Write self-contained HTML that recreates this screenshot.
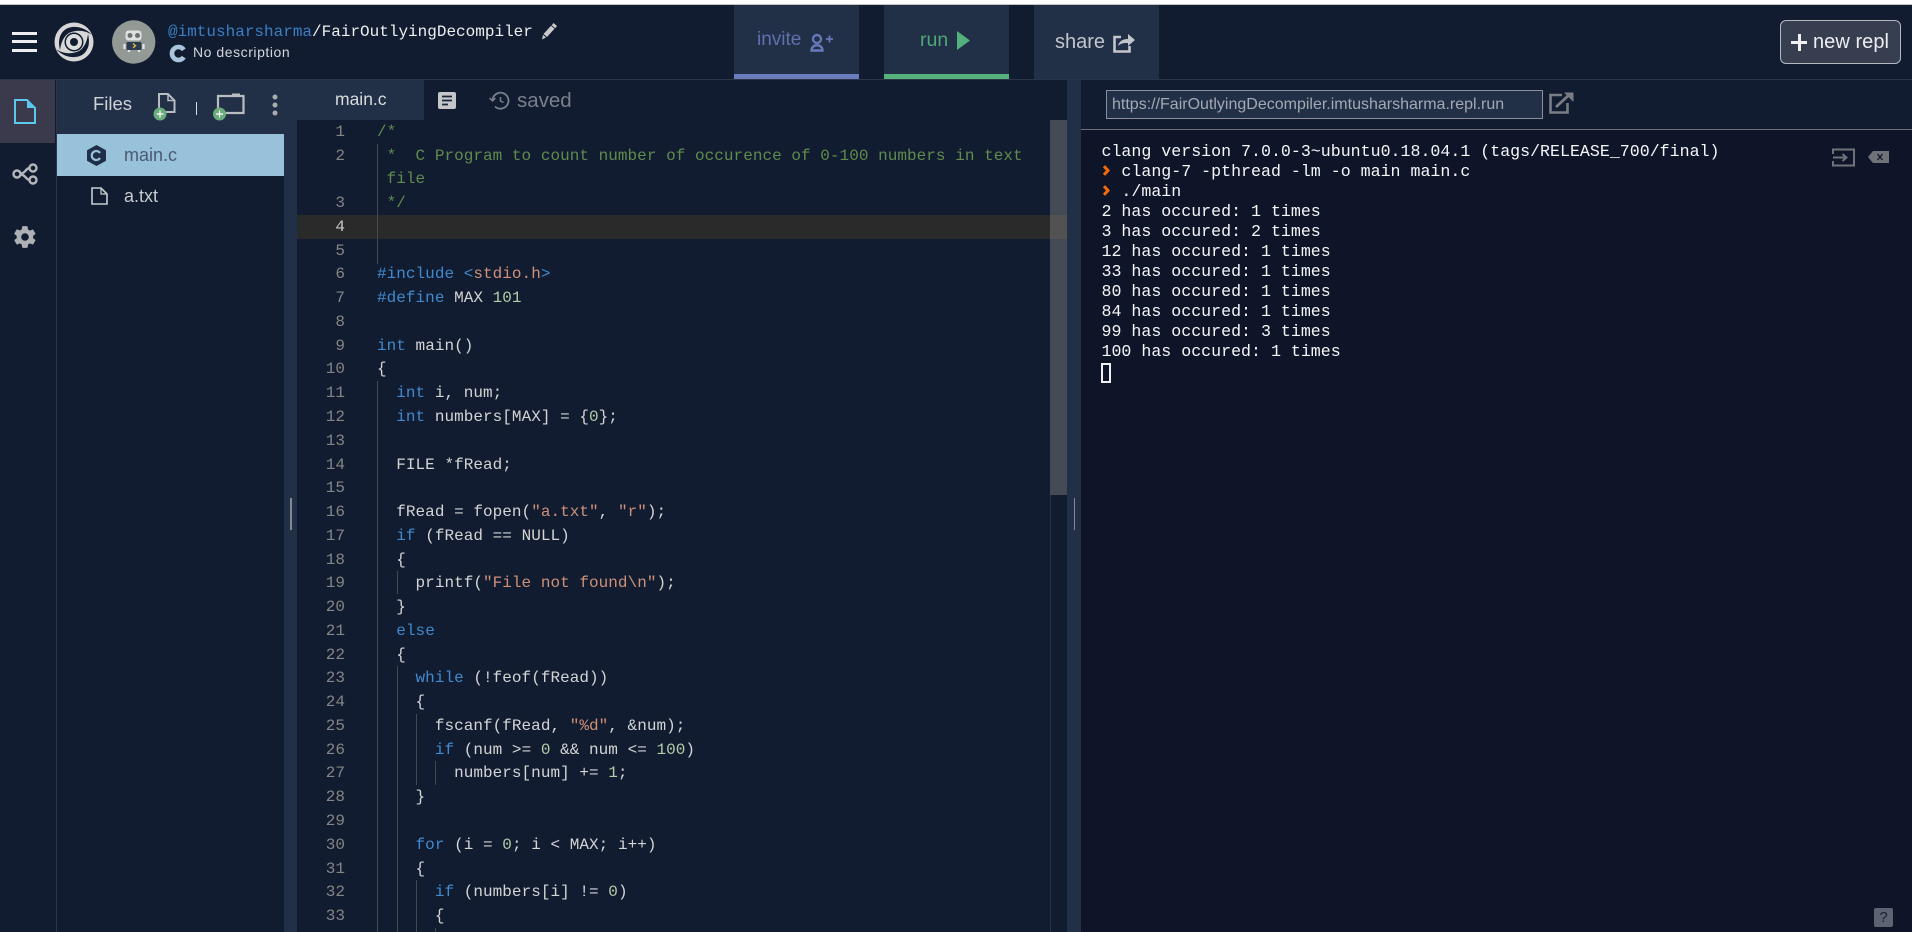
<!DOCTYPE html>
<html lang="en">
<head>
<meta charset="utf-8">
<title>FairOutlyingDecompiler</title>
<style>
html,body{margin:0;padding:0;width:1912px;height:932px;overflow:hidden;background:#111c30}
*{box-sizing:border-box}
.a{position:absolute}
body{font-family:"Liberation Sans",sans-serif;position:relative}
svg{position:absolute;overflow:visible}
.btn{position:absolute;top:5px;height:74px;width:125px;background:#212f47;font-size:18px}
.btn span{position:absolute;white-space:nowrap}
.stripe{position:absolute;left:0;right:0;bottom:0;height:5px}
#nums,#code{position:absolute;top:120.8px;font:16px/23.77px "Liberation Mono",monospace;white-space:pre;margin:0}
#nums{left:297px;width:48px;text-align:right;color:#858585}
#code{left:377px;color:#d4d4d4;letter-spacing:.035px}
#code div,#nums div{height:23.77px}
.k{color:#4189cc}.s{color:#ce9178}.n{color:#b5cea8}.c{color:#608b4e}
.g{position:absolute;width:1px;background:#44484f}
#term{position:absolute;left:1101.5px;top:142px;font:16.63px/20px "Liberation Mono",monospace;color:#f4f6f8;white-space:pre;margin:0}
</style>
</head>
<body>
<div class="a" style="left:0;top:0;width:1912px;height:4px;background:#fff"></div>
<div class="a" style="left:0;top:4px;width:1912px;height:1px;background:#c4c4c4"></div>
<div class="a" style="left:0;top:5px;width:1912px;height:74px;background:#111c30"></div>
<div class="a" style="left:0;top:79px;width:1912px;height:1px;background:#2a3648"></div>

<!-- hamburger -->
<div class="a" style="left:12px;top:32px;width:25px;height:3px;background:#eee"></div>
<div class="a" style="left:12px;top:40px;width:25px;height:3px;background:#eee"></div>
<div class="a" style="left:12px;top:49px;width:25px;height:3px;background:#eee"></div>

<!-- logo -->
<svg style="left:54px;top:21.500px" width="40" height="40" viewBox="0 0 40 40">
<circle cx="20" cy="20" r="19.500" fill="#d6d6d6"/>
<path id="bl" d="M38 13C30 4 17 2.500 10 8.500 5 13 4 20 6 28 7 20 10 14 15 11 22 7.500 31 8 38 13Z" fill="#111c30"/>
<path d="M38 13C30 4 17 2.500 10 8.500 5 13 4 20 6 28 7 20 10 14 15 11 22 7.500 31 8 38 13Z" fill="#111c30" transform="rotate(180 20 20)"/>
<circle cx="20" cy="20" r="9.500" fill="#111c30"/>
<circle cx="20" cy="20" r="6" fill="none" stroke="#dcdcdc" stroke-width="4"/>
</svg>

<!-- avatar -->
<svg style="left:112px;top:20px" width="44" height="44" viewBox="0 0 44 44">
<circle cx="21.700" cy="22" r="21.700" fill="#939995"/>
<rect x="13.500" y="10.500" width="16" height="10" rx="3" fill="#dfe1e1"/>
<circle cx="18" cy="15.500" r="2.500" fill="#6a6f70"/><circle cx="25.500" cy="15.500" r="2.500" fill="#6a6f70"/>
<rect x="14.500" y="22" width="15" height="8" rx="1.500" fill="#2a3a50"/>
<path d="M21 23.500l2.500 2.200-2.500 2.200" fill="none" stroke="#e6b63a" stroke-width="1.400"/>
<path d="M12.500 24v5M31.500 24v5M17 30v2M27 30v2" stroke="#e4e6e6" stroke-width="2.200"/>
</svg>

<div class="a" style="left:168px;top:22px;font:16px/20px 'Liberation Mono',monospace;color:#eee;white-space:pre"><span style="color:#3a7fc4">@imtusharsharma</span>/FairOutlyingDecompiler</div>
<svg style="left:541px;top:22px" width="17" height="18" viewBox="0 0 17 18"><path d="M12.500 1l3.500 3-1.800 2.200-3.500-3zM10 3.800l3.500 3-7.500 8.200-3.500-3zM2 12.800l3 2.700-4 2z" fill="#c8c9cb"/></svg>
<svg style="left:169px;top:45px" width="18" height="17" viewBox="0 0 18 17"><path d="M14.800 4.800A6.500 6.500 0 1 0 14.800 12.200" fill="none" stroke="#a9c4dc" stroke-width="4.600"/></svg>
<div class="a" style="left:193px;top:44px;font-size:14px;line-height:17px;color:#d4d6da;letter-spacing:.55px;white-space:nowrap">No description</div>

<!-- top buttons -->
<div class="btn" style="left:734px"><span style="left:23px;top:24px;color:#5f70ad;font-size:19px">invite</span>
<svg style="left:76px;top:28px" width="24" height="20" viewBox="0 0 24 20"><circle cx="7" cy="6" r="4" fill="none" stroke="#6678b8" stroke-width="2.400"/><path d="M1.500 17.500c0-7 11-7 11 0z" fill="none" stroke="#6678b8" stroke-width="2.400"/><path d="M16 6h7M19.500 2.500v7" stroke="#6678b8" stroke-width="1.800"/></svg>
<div class="stripe" style="background:#6a7cbc"></div></div>
<div class="btn" style="left:884px"><span style="left:36px;top:24px;color:#4fa877;font-size:19.500px">run</span>
<svg style="left:72.500px;top:26px" width="13" height="19" viewBox="0 0 13 19"><path d="M0 0l13 9.500L0 19z" fill="#53b07c"/></svg>
<div class="stripe" style="background:#55b27d"></div></div>
<div class="btn" style="left:1034px"><span style="left:21px;top:26px;color:#c3c6cb;font-size:20px">share</span>
<svg style="left:79px;top:28px" width="23" height="20" viewBox="0 0 23 20"><path d="M8 4H1.500v14.500h15V13" fill="none" stroke="#c3c6cb" stroke-width="2.600"/><path d="M5 13c1-5 5-7 10-7V1l7 6-7 6v-3c-4 0-7 0-10 3z" fill="#c3c6cb"/></svg>
</div>

<!-- new repl -->
<div class="a" style="left:1780px;top:20px;width:121px;height:44px;background:#363e50;border:1px solid #b4b8c0;border-radius:6px"></div>
<div class="a" style="left:1791px;top:41px;width:16px;height:3px;background:#f0f0f0"></div>
<div class="a" style="left:1797.500px;top:34px;width:3px;height:17px;background:#f0f0f0"></div>
<div class="a" style="left:1813px;top:30px;font-size:20px;line-height:24px;color:#eceef0;white-space:nowrap;letter-spacing:.05px">new repl</div>

<!-- sidebar -->
<div class="a" style="left:0;top:80px;width:55px;height:63px;background:#3a3a4c"></div>
<div class="a" style="left:56px;top:80px;width:1px;height:852px;background:#2a3648"></div>
<svg style="left:14px;top:99px" width="22" height="25" viewBox="0 0 22 25"><path d="M1 1h12l8 8v15H1z" fill="none" stroke="#5cc8ee" stroke-width="2"/><path d="M13 1l8 8h-8z" fill="#5cc8ee"/></svg>
<svg style="left:12px;top:164px" width="26" height="20" viewBox="0 0 26 20" fill="none" stroke="#b4b6b9" stroke-width="2.400"><circle cx="5" cy="10" r="3.500"/><circle cx="21" cy="4" r="3.500"/><circle cx="21" cy="16" r="3.500"/><path d="M8.500 9.500c5 0 5-5 9-5.500M8.500 10.500c5 0 5 5 9 5.500"/></svg>
<svg style="left:12px;top:224px" width="26" height="26" viewBox="0 0 24 24"><path fill="#aeb0b3" d="M19.400 13c.1-.3.100-.7.100-1s0-.7-.1-1l2.100-1.600c.2-.1.200-.4.100-.6l-2-3.500c-.1-.2-.4-.3-.6-.2l-2.500 1c-.5-.4-1.100-.7-1.700-1l-.4-2.600c0-.3-.2-.5-.5-.5h-4c-.3 0-.5.2-.5.500L9 5c-.6.300-1.200.6-1.700 1l-2.500-1c-.2-.1-.5 0-.6.200l-2 3.500c-.1.200-.1.500.1.600L4.400 11c-.1.300-.1.700-.1 1s0 .7.100 1l-2.100 1.600c-.2.100-.2.400-.1.600l2 3.500c.1.200.4.300.6.200l2.500-1c.5.400 1.100.7 1.700 1l.4 2.600c0 .3.200.5.500.5h4c.3 0 .5-.2.500-.5l.4-2.600c.6-.3 1.200-.6 1.700-1l2.500 1c.2.100.5 0 .6-.2l2-3.500c.1-.2.100-.5-.1-.6zM12 15.500a3.500 3.500 0 1 1 0-7 3.500 3.500 0 0 1 0 7z"/></svg>

<!-- files panel -->
<div class="a" style="left:57px;top:80px;width:240px;height:852px;background:#212f47"></div>
<div class="a" style="left:57px;top:134px;width:227px;height:798px;background:#111c30"></div>
<div class="a" style="left:57px;top:134px;width:227px;height:42px;background:#98c1da"></div>
<div class="a" style="left:93px;top:93px;font-size:18.500px;line-height:22px;color:#d0d3d6">Files</div>
<svg style="left:153px;top:93px" width="24" height="29" viewBox="0 0 24 29"><path d="M6 1h9l6.500 6.500V19H6z" fill="none" stroke="#b9bcc0" stroke-width="2"/><path d="M15 1v6.500h6.500" fill="none" stroke="#b9bcc0" stroke-width="1.500"/><circle cx="7" cy="21" r="6.500" fill="#6bac7c"/><path d="M3.500 21h7M7 17.500v7" stroke="#fff" stroke-width="1.200"/></svg>
<div class="a" style="left:195.500px;top:102px;width:1.500px;height:13px;background:#dcdcdc"></div>
<svg style="left:213px;top:92px" width="32" height="30" viewBox="0 0 32 30"><path d="M5 4h25.500v17H5z" fill="none" stroke="#b9bcc0" stroke-width="2.200"/><rect x="19" y="1.500" width="8" height="3" fill="#b9bcc0"/><circle cx="6.500" cy="22" r="6.500" fill="#6bac7c"/><path d="M3 22h7M6.500 18.500v7" stroke="#fff" stroke-width="1.200"/></svg>
<svg style="left:272px;top:94px" width="6" height="22" viewBox="0 0 6 22" fill="#a9adb3"><circle cx="3" cy="3" r="2.500"/><circle cx="3" cy="11" r="2.500"/><circle cx="3" cy="19" r="2.500"/></svg>

<svg style="left:87px;top:145px" width="19" height="21" viewBox="0 0 19 21"><path d="M9.500 0L19 5.300v10.400L9.500 21 0 15.700V5.300z" fill="#1f2f4a"/><path d="M13 8a4.500 4.500 0 1 0 0 5" fill="none" stroke="#98c1da" stroke-width="2.200"/></svg>
<div class="a" style="left:124px;top:144.500px;font-size:18px;line-height:21px;color:#4b5a72">main.c</div>
<svg style="left:91px;top:187px" width="17" height="18" viewBox="0 0 17 18"><path d="M1 1h9l6 6v10H1z" fill="none" stroke="#c8cbcf" stroke-width="1.600"/><path d="M10 1v6h6" fill="none" stroke="#c8cbcf" stroke-width="1.200"/></svg>
<div class="a" style="left:124px;top:186px;font-size:18px;line-height:21px;color:#c7cacf">a.txt</div>

<!-- editor -->
<div class="a" style="left:297px;top:80px;width:770px;height:852px;background:#111c30"></div>
<div class="a" style="left:297px;top:80px;width:127px;height:40px;background:#212f47"></div>
<div class="a" style="left:335px;top:89px;font-size:17.500px;line-height:21px;color:#d9dbde">main.c</div>
<svg style="left:438px;top:92px" width="18" height="17" viewBox="0 0 18 17"><rect width="18" height="17" rx="2" fill="#c4c6c9"/><path d="M4 4.500h10M4 8.500h10M4 12.500h6" stroke="#1a2436" stroke-width="1.700"/></svg>
<svg style="left:489px;top:91px" width="21" height="19" viewBox="0 0 21 19" fill="none" stroke="#7a7f8a" stroke-width="1.800"><path d="M3.500 9.500a8 8 0 1 1 2.500 6"/><path d="M0.500 7l3 3 3-3" stroke-width="1.500"/><path d="M11.500 6v4l3 1.500" stroke-width="1.500"/></svg>
<div class="a" style="left:517px;top:90px;font-size:20.500px;line-height:22px;color:#7a7f8a">saved</div>

<div class="a" style="left:297px;top:215px;width:770px;height:24px;background:#2a2a2a"></div>

<div class="g" style="left:377px;top:144px;height:120px"></div>
<div class="g" style="left:377px;top:381px;height:551px"></div>
<div class="g" style="left:397px;top:571px;height:23px"></div>
<div class="g" style="left:397px;top:666px;height:266px"></div>
<div class="g" style="left:416px;top:714px;height:71px"></div>
<div class="g" style="left:416px;top:880px;height:52px"></div>
<div class="g" style="left:435px;top:761px;height:24px"></div>
<div class="g" style="left:435px;top:928px;height:4px"></div>

<div id="nums"><div>1</div><div>2</div><div></div><div>3</div><div style="color:#c6c6c6">4</div><div>5</div><div>6</div><div>7</div><div>8</div><div>9</div><div>10</div><div>11</div><div>12</div><div>13</div><div>14</div><div>15</div><div>16</div><div>17</div><div>18</div><div>19</div><div>20</div><div>21</div><div>22</div><div>23</div><div>24</div><div>25</div><div>26</div><div>27</div><div>28</div><div>29</div><div>30</div><div>31</div><div>32</div><div>33</div></div>

<div id="code"><div class="c">/*</div><div class="c"> *  C Program to count number of occurence of 0-100 numbers in text</div><div class="c"> file</div><div class="c"> */</div><div></div><div></div><div><span class="k">#include</span> <span class="k">&lt;</span><span class="s">stdio.h</span><span class="k">&gt;</span></div><div><span class="k">#define</span> MAX <span class="n">101</span></div><div></div><div><span class="k">int</span> main()</div><div>{</div><div>  <span class="k">int</span> i, num;</div><div>  <span class="k">int</span> numbers[MAX] = {<span class="n">0</span>};</div><div></div><div>  FILE *fRead;</div><div></div><div>  fRead = fopen(<span class="s">"a.txt"</span>, <span class="s">"r"</span>);</div><div>  <span class="k">if</span> (fRead == NULL)</div><div>  {</div><div>    printf(<span class="s">"File not found\n"</span>);</div><div>  }</div><div>  <span class="k">else</span></div><div>  {</div><div>    <span class="k">while</span> (!feof(fRead))</div><div>    {</div><div>      fscanf(fRead, <span class="s">"%d"</span>, &amp;num);</div><div>      <span class="k">if</span> (num &gt;= <span class="n">0</span> &amp;&amp; num &lt;= <span class="n">100</span>)</div><div>        numbers[num] += <span class="n">1</span>;</div><div>    }</div><div></div><div>    <span class="k">for</span> (i = <span class="n">0</span>; i &lt; MAX; i++)</div><div>    {</div><div>      <span class="k">if</span> (numbers[i] != <span class="n">0</span>)</div><div>      {</div></div>

<!-- scrollbar -->
<div class="a" style="left:1050px;top:120px;width:17px;height:375px;background:rgba(121,121,121,.5)"></div>
<div class="a" style="left:1050px;top:495px;width:1px;height:437px;background:#263348"></div>

<!-- gutters -->
<div class="a" style="left:1067px;top:80px;width:14px;height:852px;background:#212f47"></div>
<div class="a" style="left:1073.500px;top:498px;width:1.500px;height:32px;background:#85888e"></div>
<div class="a" style="left:290px;top:498px;width:1.500px;height:32px;background:#85888e"></div>

<!-- right -->
<div class="a" style="left:1081px;top:80px;width:831px;height:49px;background:#111c30"></div>
<div class="a" style="left:1081px;top:129px;width:831px;height:1px;background:#6e7178"></div>
<div class="a" style="left:1081px;top:130px;width:831px;height:802px;background:#0f1528"></div>
<div class="a" style="left:1106px;top:90px;width:437px;height:29px;background:#212f47;border:1.500px solid #8a8f98;font-size:16px;line-height:28px;color:#a4a9b1;padding-left:5px;white-space:nowrap">https://FairOutlyingDecompiler.imtusharsharma.repl.run</div>
<svg style="left:1549px;top:91px" width="26" height="23" viewBox="0 0 26 23" fill="none" stroke="#7a7d83" stroke-width="2.600"><path d="M13 4H1.500v17.500h17V12"/><path d="M7 16L21 3" stroke-width="2.800"/><path d="M15 1.500h9.500V11z" fill="#7a7d83" stroke="none"/></svg>

<pre id="term">clang version 7.0.0-3~ubuntu0.18.04.1 (tags/RELEASE_700/final)
  clang-7 -pthread -lm -o main main.c
  ./main
2 has occured: 1 times
3 has occured: 2 times
12 has occured: 1 times
33 has occured: 1 times
80 has occured: 1 times
84 has occured: 1 times
99 has occured: 3 times
100 has occured: 1 times</pre>
<svg style="left:1102px;top:165px" width="9" height="11" viewBox="0 0 9 11"><path d="M2 1.200L6 5.500 2 9.800" fill="none" stroke="#f26a0a" stroke-width="3"/></svg>
<svg style="left:1102px;top:185px" width="9" height="11" viewBox="0 0 9 11"><path d="M2 1.200L6 5.500 2 9.800" fill="none" stroke="#f26a0a" stroke-width="3"/></svg>
<div class="a" style="left:1101px;top:363px;width:10px;height:20px;border:2px solid #f0f2f4"></div>

<svg style="left:1832px;top:148px" width="23" height="19" viewBox="0 0 23 19" fill="none" stroke="#6f7279" stroke-width="2"><path d="M1 6V1.500h21v16H1V13"/><path d="M1 9.500h13"/><path d="M10.500 6l4 3.500-4 3.500"/></svg>
<svg style="left:1868px;top:151px" width="21" height="12" viewBox="0 0 21 12"><path d="M5 0h16v12H5L0 6z" fill="#6f7279"/><path d="M9.500 3l5 6M14.500 3l-5 6" stroke="#0f1528" stroke-width="1.300"/></svg>

<div class="a" style="left:1874px;top:908px;width:19px;height:19px;background:#5d6371;border-radius:2px;color:#1a2030;font-size:15px;line-height:19px;text-align:center">?</div>
</body>
</html>
